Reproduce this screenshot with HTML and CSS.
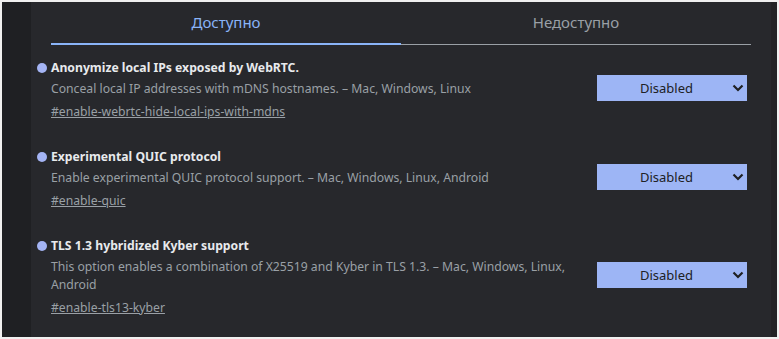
FILE: index.html
```html
<!DOCTYPE html>
<html lang="ru">
<head>
    <meta charset="UTF-8">
    <meta name="viewport" content="width=device-width, initial-scale=1.0">
    <title>Experiments</title>
    <link rel="stylesheet" href="styles.css">
</head>
<body>
    <div class="frame">
        <div class="sidebar"></div>
        <div class="main">
            <div class="tabs">
                <div class="tab active">Доступно</div>
                <div class="tab">Недоступно</div>
            </div>

            <div class="experiment">
                <div class="info">
                    <div class="title">Anonymize local IPs exposed by WebRTC.</div>
                    <div class="description">Conceal local IP addresses with mDNS hostnames. – Mac, Windows, Linux</div>
                    <a class="permalink" href="#enable-webrtc-hide-local-ips-with-mdns">#enable-webrtc-hide-local-ips-with-mdns</a>
                </div>
                <div class="select">
                    <span>Disabled</span>
                    <svg width="12" height="8" viewBox="0 0 12 8"><path d="M1.5 1.5 L6 6 L10.5 1.5" fill="none" stroke="#1f2023" stroke-width="2.2"/></svg>
                </div>
            </div>

            <div class="experiment">
                <div class="info">
                    <div class="title">Experimental QUIC protocol</div>
                    <div class="description">Enable experimental QUIC protocol support. – Mac, Windows, Linux, Android</div>
                    <a class="permalink" href="#enable-quic">#enable-quic</a>
                </div>
                <div class="select">
                    <span>Disabled</span>
                    <svg width="12" height="8" viewBox="0 0 12 8"><path d="M1.5 1.5 L6 6 L10.5 1.5" fill="none" stroke="#1f2023" stroke-width="2.2"/></svg>
                </div>
            </div>

            <div class="experiment">
                <div class="info">
                    <div class="title">TLS 1.3 hybridized Kyber support</div>
                    <div class="description">This option enables a combination of X25519 and Kyber in TLS 1.3. – Mac, Windows, Linux, Android</div>
                    <a class="permalink" href="#enable-tls13-kyber">#enable-tls13-kyber</a>
                </div>
                <div class="select">
                    <span>Disabled</span>
                    <svg width="12" height="8" viewBox="0 0 12 8"><path d="M1.5 1.5 L6 6 L10.5 1.5" fill="none" stroke="#1f2023" stroke-width="2.2"/></svg>
                </div>
            </div>
        </div>
        <div class="scrollbar"></div>
    </div>
</body>
</html>
```

FILE: styles.css
```css
body {
    margin: 0;
    padding: 2px;
    background-color: #f0f0f0;
    font-family: "Noto Sans", "Open Sans", sans-serif;
}
.frame {
    display: flex;
    height: 335px;
    overflow: hidden;
}
.sidebar {
    width: 29px;
    background-color: #1f2023;
}
.scrollbar {
    width: 6px;
    background-color: #222326;
}
.main {
    flex: 1;
    background-color: #27282c;
    padding: 0 20px;
}
.tabs {
    display: flex;
}
.tab {
    flex: 1;
    text-align: center;
    font-size: 15px;
    line-height: 20px;
    padding: 10px 0 12px;
    color: #9aa0a6;
    border-bottom: 1px solid #9aa0a6;
}
.tab.active {
    color: #8ab4f8;
    border-bottom: 2px solid #8ab4f8;
    padding-bottom: 11px;
}
.experiment {
    display: flex;
    align-items: center;
    padding: 13px 4px 26px 0;
}
.experiment + .experiment {
    padding-top: 0;
}
.info {
    flex: 1;
    padding-right: 20px;
}
.title {
    font-size: 12.2px;
    line-height: 20px;
    font-weight: bold;
    color: #e8eaed;
}
.title::before {
    content: "";
    display: inline-block;
    width: 10px;
    height: 10px;
    border-radius: 50%;
    background-color: #a4b4f4;
    margin: 0 4px 0 -14px;
    vertical-align: -1px;
}
.description {
    font-size: 12.2px;
    line-height: 18px;
    margin-top: 2px;
    color: #9aa0a6;
}
.permalink {
    display: inline-block;
    font-size: 12.2px;
    line-height: 18px;
    margin-top: 5px;
    color: #9aa0a6;
}
.select {
    width: 150px;
    height: 26px;
    margin-bottom: 4px;
    display: flex;
    align-items: center;
    background-color: #9db5f5;
    color: #202124;
    font-size: 13px;
}
.select span {
    flex: 1;
    text-align: center;
    padding-left: 4px;
}
.select svg {
    margin-right: 3px;
}
```
